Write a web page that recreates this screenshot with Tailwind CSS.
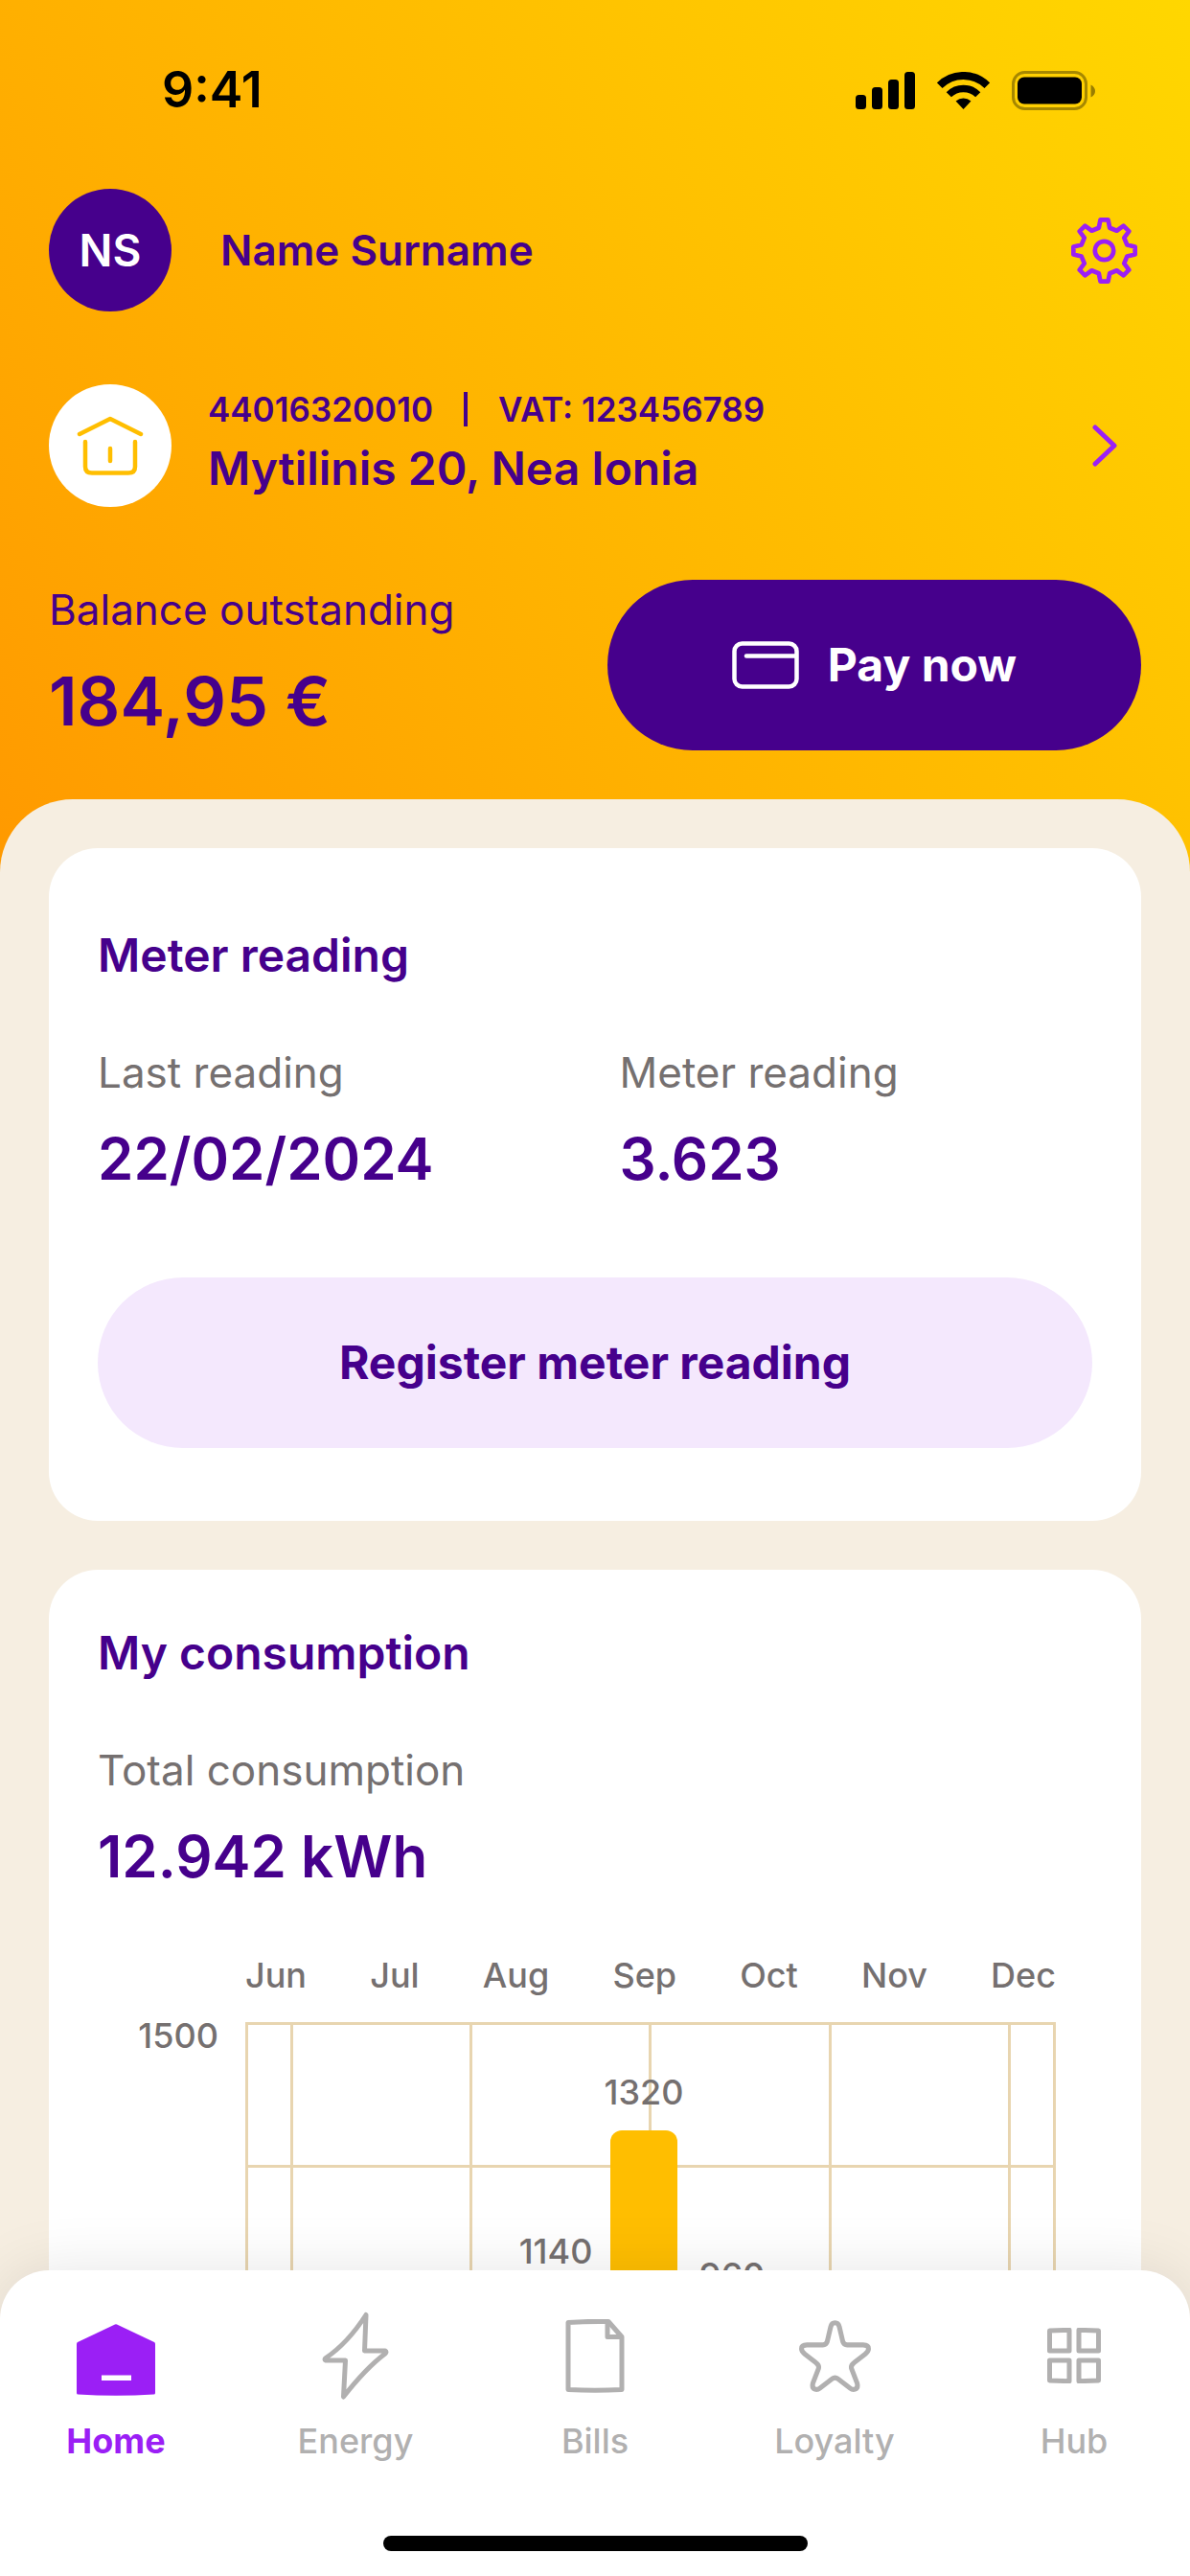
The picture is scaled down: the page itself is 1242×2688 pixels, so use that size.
<!DOCTYPE html>
<html lang="en">
<head>
<meta charset="utf-8">
<meta name="viewport" content="width=device-width, initial-scale=1">
<title>Home</title>
<script src="https://cdn.jsdelivr.net/npm/@tailwindcss/browser@4"></script>
</head>
<body class="flex h-screen flex-col overflow-hidden bg-[#f6eee1] font-['Inter',sans-serif] text-[#46008c]">

<main class="min-h-0 flex-1 overflow-y-auto [scrollbar-width:none]">
  <header class="bg-[linear-gradient(52deg,#ff9900_0%,#ffd700_100%)] px-[51px] pt-[62px] pb-[127px]">
    <!-- Status bar -->
    <div class="flex h-16 items-center justify-between pr-12 pl-[118px] text-black">
      <span class="text-[52px] font-semibold">9:41</span>
      <div class="flex items-center gap-[23px]">
        <svg class="h-[39px] w-[62px]" viewBox="0 0 62 39" aria-hidden="true"><rect y="24" width="11" height="15" rx="3.5"/><rect x="17" y="16" width="11" height="23" rx="3.5"/><rect x="34" y="8" width="11" height="31" rx="3.5"/><rect x="51" width="11" height="39" rx="3.5"/></svg>
        <svg class="h-[39px] w-[55px]" viewBox="0 0 164 118" fill="none" stroke="#000" aria-hidden="true"><path d="M7 43A106 106 0 0 1 157 43" stroke-width="24"/><path d="M36 72A65 65 0 0 1 128 72" stroke-width="22"/><path d="M82 118L58 92A38 38 0 0 1 106 92Z" fill="#000" stroke="none"/></svg>
        <svg class="h-[41px] w-[87px]" viewBox="0 0 87 41" aria-hidden="true"><rect x="1.5" y="1.5" width="76" height="38" rx="12" fill="none" stroke="#000" stroke-opacity=".35" stroke-width="3"/><rect x="6" y="6.500" width="67" height="28" rx="7"/><path d="M82.500 14.500Q87 17 87 21T82.500 27.500Z" fill-opacity=".4"/></svg>
      </div>
    </div>

    <!-- Profile -->
    <div class="mt-[71px] flex items-center">
      <div class="flex size-32 items-center justify-center rounded-full bg-[#46008c] text-[46px] font-semibold text-white">NS</div>
      <p class="ml-[51px] flex-1 text-[44px] font-semibold">Name Surname</p>
      <button type="button" aria-label="Settings" class="mr-1">
        <svg class="size-[69px]" viewBox="115 81 206 206" fill="none" stroke="#9b1ff5" stroke-width="14" stroke-linejoin="round"><path d="M206 88H230L235 113L257 122L278 107L295 124L280 144L289 166L314 172V196L289 202L280 224L295 244L278 261L257 246L235 255L230 280H206L201 255L179 246L158 261L141 244L156 224L147 202L122 196V172L147 166L156 144L141 124L158 107L179 122L201 113Z"/><circle cx="218" cy="184" r="29"/></svg>
      </button>
    </div>

    <!-- Supply address -->
    <a href="#" class="mt-[76px] flex items-center">
      <span class="flex size-32 items-center justify-center rounded-full bg-white">
        <svg class="h-[62px] w-[70px]" viewBox="0 0 70 62" fill="none" stroke="#ffbe00" stroke-width="4.500" stroke-linecap="round" stroke-linejoin="round" aria-hidden="true"><path d="M3 19L35 3L67 19M9 27V53Q9 59.500 16 59.500H54Q61 59.500 61 53V27M35 34V47"/></svg>
      </span>
      <span class="ml-[38px] flex flex-1 flex-col">
        <span class="flex items-center gap-8 text-[35px] leading-[48px] font-semibold"><span>44016320010</span><span class="h-9 w-1 bg-[#46008c]"></span><span>VAT: 123456789</span></span>
        <span class="text-[48px] leading-[76px] font-semibold">Mytilinis 20, Nea Ionia</span>
      </span>
      <svg class="mr-[25px] h-[44px] w-[26px]" viewBox="0 0 26 44" fill="none" stroke="#9b1ff5" stroke-width="5" stroke-linecap="round" stroke-linejoin="round" aria-hidden="true"><path d="M3 3L23 22L3 41"/></svg>
    </a>

    <!-- Balance -->
    <div class="mt-[76px] flex items-center justify-between">
      <div class="flex flex-col gap-4">
        <p class="text-[44px] leading-[60px]">Balance outstanding</p>
        <p class="text-[70px] leading-[100px] font-semibold">184,95 €</p>
      </div>
      <button type="button" class="flex h-[178px] w-[557px] items-center justify-center gap-[30px] rounded-full bg-[#46008c] text-[48px] font-bold text-white">
        <svg class="h-[50px] w-[70px]" viewBox="0 0 70 50" fill="none" stroke="#fff" stroke-width="4.500" stroke-linecap="round" aria-hidden="true"><rect x="2.500" y="2.500" width="65" height="45" rx="8"/><path d="M15 15.500H66"/></svg>
        Pay now
      </button>
    </div>
  </header>

  <div class="-mt-[76px] flex flex-col gap-[51px] rounded-t-[76px] bg-[#f6eee1] px-[51px] pt-[51px]">
    <section class="rounded-[51px] bg-white px-[51px] py-[76px]">
      <h2 class="text-[48px] leading-[72px] font-semibold">Meter reading</h2>
      <dl class="mt-14 grid grid-cols-2 gap-[51px]">
        <div>
          <dt class="text-[44px] leading-[60px] text-[#757070]">Last reading</dt>
          <dd class="mt-5 text-[60px] leading-[80px] font-semibold">22/02/2024</dd>
        </div>
        <div>
          <dt class="text-[44px] leading-[60px] text-[#757070]">Meter reading</dt>
          <dd class="mt-5 text-[60px] leading-[80px] font-semibold">3.623</dd>
        </div>
      </dl>
      <button type="button" class="mt-[84px] h-[178px] w-full rounded-full bg-[#f4e8fd] text-[48px] font-bold">Register meter reading</button>
    </section>

    <section class="rounded-t-[51px] bg-white px-[51px] pt-[51px]">
      <h2 class="text-[48px] leading-[72px] font-semibold">My consumption</h2>
      <dl class="mt-14">
        <dt class="text-[44px] leading-[60px] text-[#757070]">Total consumption</dt>
        <dd class="mt-5 text-[60px] leading-[80px] font-semibold">12.942 kWh</dd>
      </dl>

      <!-- Chart -->
      <div class="mt-[60px] grid grid-cols-[154px_1fr] pr-[38px] text-[36px] font-medium text-[#757070]">
        <div class="col-start-2 flex justify-between leading-[48px]"><span>Jun</span><span>Jul</span><span>Aug</span><span>Sep</span><span>Oct</span><span>Nov</span><span>Dec</span></div>
        <div class="mt-[25px] pr-7 text-right leading-7">1500</div>
        <div class="relative mt-[25px] h-[894px]">
          <div class="absolute inset-0 grid grid-cols-[1fr_4fr_4fr_4fr_4fr_1fr] border-r-3 border-[#e8d5b0]">
            <i class="border-l-3 border-[#e8d5b0]"></i><i class="border-l-3 border-[#e8d5b0]"></i><i class="border-l-3 border-[#e8d5b0]"></i><i class="border-l-3 border-[#e8d5b0]"></i><i class="border-l-3 border-[#e8d5b0]"></i><i class="border-l-3 border-[#e8d5b0]"></i>
          </div>
          <div class="absolute inset-0 grid grid-rows-6 border-b-3 border-[#e8d5b0]">
            <i class="border-t-3 border-[#e8d5b0]"></i><i class="border-t-3 border-[#e8d5b0]"></i><i class="border-t-3 border-[#e8d5b0]"></i><i class="border-t-3 border-[#e8d5b0]"></i><i class="border-t-3 border-[#e8d5b0]"></i><i class="border-t-3 border-[#e8d5b0]"></i>
          </div>
          <div class="relative flex h-full items-end gap-[22px] pl-[105px] leading-[48px]">
            <div class="w-[70px] rounded-t-xl bg-[#ffbe00]" style="height:450px"></div>
            <div class="w-[70px] rounded-t-xl bg-[#ffbe00]" style="height:500px"></div>
            <div class="flex w-[70px] flex-col items-center gap-4">1140<div class="w-full rounded-t-xl bg-[#ffbe00]" style="height:615px"></div></div>
            <div class="flex w-[70px] flex-col items-center gap-4">1320<div class="w-full rounded-t-xl bg-[#ffbe00]" style="height:781px"></div></div>
            <div class="flex w-[70px] flex-col items-center gap-4">960<div class="w-full rounded-t-xl bg-[#ffbe00]" style="height:590px"></div></div>
            <div class="w-[70px] rounded-t-xl bg-[#ffbe00]" style="height:480px"></div>
          </div>
        </div>
      </div>
    </section>
  </div>
</main>

<nav class="relative -mt-[51px] overflow-x-clip rounded-t-[51px] bg-white pt-[43px] pb-[26px] text-[36px] leading-[48px] font-medium text-[#b1b0b0] shadow-[0_0_64px_rgba(0,0,0,0.1)]">
  <div class="-mx-1 grid grid-cols-5">
    <a href="#" aria-current="page" class="flex flex-col items-center gap-[19px] font-bold text-[#9b1ff5]">
      <span class="flex h-[92px] items-center pt-2"><svg class="h-[75px] w-[82px]" viewBox="0 0 82 75" fill="currentColor" aria-hidden="true"><path d="M40 .4Q41 0 42 .4L81 19Q82 19.500 82 21V72Q82 73.500 80.500 73.600Q41 76 1.500 73.600Q0 73.500 0 72V21Q0 19.500 1 19Z"/><path d="M26 53.500H57V59H26Z" fill="#fff"/></svg></span>
      Home
    </a>
    <a href="#" class="flex flex-col items-center gap-[19px]">
      <span class="flex h-[92px] items-center"><svg class="h-[92px] w-[70px]" viewBox="0 0 70 92" fill="none" stroke="currentColor" stroke-width="5" stroke-linejoin="round" aria-hidden="true"><path d="M46 3.500L44.500 41H66Q68 42 66 44Q46 59 22.500 89L24.500 51H4Q2 50 4 48.500Q27 33 46 3.500Z"/></svg></span>
      Energy
    </a>
    <a href="#" class="flex flex-col items-center gap-[19px]">
      <span class="flex h-[92px] items-center"><svg class="h-[77px] w-[62px]" viewBox="0 0 62 77" fill="none" stroke="currentColor" stroke-width="5" stroke-linejoin="round" aria-hidden="true"><path d="M3 3.500Q24 2 45 2.500L59 18.500V73.500Q31 75 3 73.500Z"/><path d="M44 3V18.500H59"/></svg></span>
      Bills
    </a>
    <a href="#" class="flex flex-col items-center gap-[19px]">
      <span class="flex h-[92px] items-center"><svg class="size-[75px]" viewBox="0 0 74 74" fill="none" stroke="currentColor" stroke-width="5" stroke-linejoin="round" aria-hidden="true"><path d="M37 2.800Q40.500 2.800 41.500 7L45 22Q46 25.500 49.500 25.500H66Q71.500 25.500 71.500 29.500Q71.500 32 68 35L56.500 44Q53 46.500 54 50L59.800 65Q61 70 57.500 71.200Q55 72 52.500 70L40 60.500Q37 58 34 60.500L21.500 70Q19 72 16.500 71.200Q13 70 14.200 65L20 50Q21 46.500 17.500 44L6 35Q2.500 32 2.500 29.500Q2.500 25.500 8 25.500H24.500Q28 25.500 29 22L32.500 7Q33.500 2.800 37 2.800Z"/></svg></span>
      Loyalty
    </a>
    <a href="#" class="flex flex-col items-center gap-[19px]">
      <span class="flex h-[92px] items-center"><svg class="h-[58px] w-[56px]" viewBox="0 0 56 58" fill="none" stroke="currentColor" stroke-width="5" stroke-linejoin="round" aria-hidden="true"><path d="M2.500 3L23 2.300V24H2.500ZM33 2.300L53.500 3V24H33ZM2.500 34H23V55.700L2.500 55ZM33 34H53.500V55L33 55.700Z"/></svg></span>
      Hub
    </a>
  </div>
  <div class="mx-auto mt-[75px] h-4 w-[443px] rounded-full bg-black"></div>
</nav>
</body>
</html>
